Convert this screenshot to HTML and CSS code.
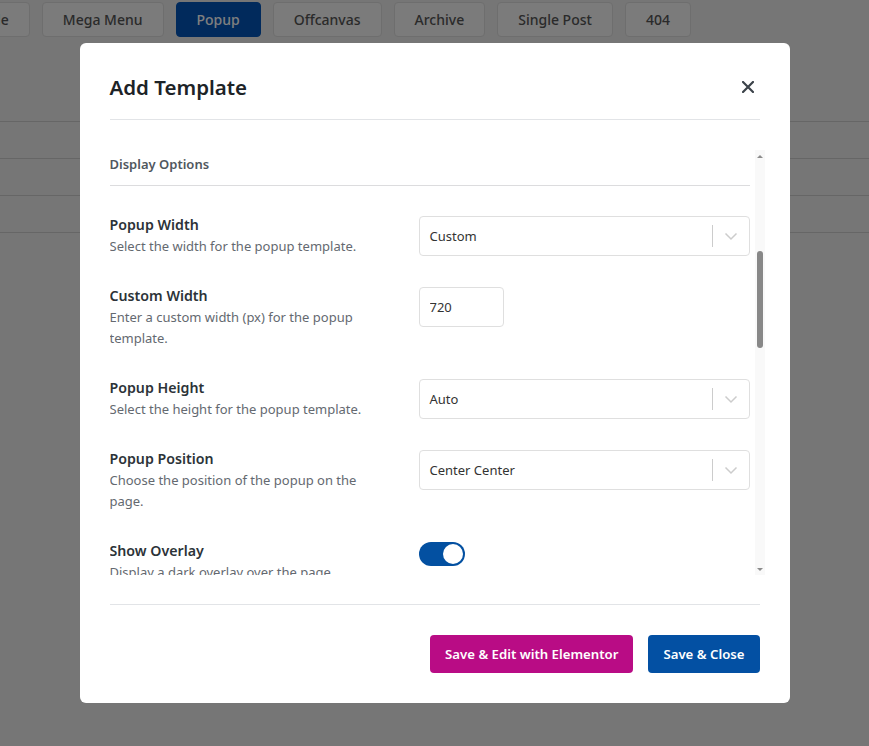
FILE: index.html
```html
<!DOCTYPE html>
<html lang="en">
<head>
    <meta charset="UTF-8">
    <meta name="viewport" content="width=device-width, initial-scale=1.0">
    <title>Templates</title>

    <link rel="stylesheet" href="styles.css">
</head>
<body>
    <div class="page">
        <nav class="tabs">
            <button class="tab">Title</button>
            <button class="tab">Mega Menu</button>
            <button class="tab active">Popup</button>
            <button class="tab">Offcanvas</button>
            <button class="tab">Archive</button>
            <button class="tab">Single Post</button>
            <button class="tab">404</button>
        </nav>

        <div class="list">
            <div class="list-row"></div>
            <div class="list-row"></div>
            <div class="list-row"></div>
        </div>
    </div>

    <div class="overlay">
        <div class="modal">
            <div class="modal-header">
                <h2 class="modal-title">Add Template</h2>
                <button class="modal-close" aria-label="Close">
                    <svg width="12" height="12" viewBox="0 0 12 12"><path d="M1 1L11 11M11 1L1 11" stroke="currentColor" stroke-width="2.2" stroke-linecap="square"/></svg>
                </button>
            </div>

            <div class="modal-body">
                <div class="modal-scroll" id="modal-scroll">

                    <section class="group">
                        <h3 class="group-title">General</h3>

                        <div class="field">
                            <div>
                                <div class="field-label">Template Name</div>
                                <div class="field-desc">Give your template a name to find it later.</div>
                            </div>
                            <input class="input input-wide" type="text" value="Newsletter Signup">
                        </div>

                        <div class="field">
                            <div>
                                <div class="field-label">Template Type</div>
                                <div class="field-desc">Choose the type of template to create.</div>
                            </div>
                            <div class="select">
                                <span class="select-value">Popup</span>
                                <span class="select-sep"></span>
                                <span class="select-arrow"><svg width="20" height="20" viewBox="0 0 20 20"><path d="M4.5 7.5L10 13L15.5 7.5" fill="none" stroke="currentColor" stroke-width="1.5"/></svg></span>
                            </div>
                        </div>

                        <div class="field">
                            <div>
                                <div class="field-label">Display Conditions</div>
                                <div class="field-desc">Choose where this template should appear.</div>
                            </div>
                            <div class="select">
                                <span class="select-value">Entire Site</span>
                                <span class="select-sep"></span>
                                <span class="select-arrow"><svg width="20" height="20" viewBox="0 0 20 20"><path d="M4.5 7.5L10 13L15.5 7.5" fill="none" stroke="currentColor" stroke-width="1.5"/></svg></span>
                            </div>
                        </div>

                        <div class="field">
                            <div>
                                <div class="field-label">Enable Template</div>
                                <div class="field-desc">Turn the template on right after saving.</div>
                            </div>
                            <div class="switch" role="switch" aria-checked="true"><span class="switch-knob"></span></div>
                        </div>
                    </section>

                    <section class="group" id="display-options">
                        <h3 class="group-title">Display Options</h3>

                        <div class="field">
                            <div>
                                <div class="field-label">Popup Width</div>
                                <div class="field-desc">Select the width for the popup template.</div>
                            </div>
                            <div class="select">
                                <span class="select-value">Custom</span>
                                <span class="select-sep"></span>
                                <span class="select-arrow"><svg width="20" height="20" viewBox="0 0 20 20"><path d="M4.5 7.5L10 13L15.5 7.5" fill="none" stroke="currentColor" stroke-width="1.5"/></svg></span>
                            </div>
                        </div>

                        <div class="field">
                            <div>
                                <div class="field-label">Custom Width</div>
                                <div class="field-desc">Enter a custom width (px) for the popup template.</div>
                            </div>
                            <input class="input" type="text" value="720">
                        </div>

                        <div class="field">
                            <div>
                                <div class="field-label">Popup Height</div>
                                <div class="field-desc">Select the height for the popup template.</div>
                            </div>
                            <div class="select">
                                <span class="select-value">Auto</span>
                                <span class="select-sep"></span>
                                <span class="select-arrow"><svg width="20" height="20" viewBox="0 0 20 20"><path d="M4.5 7.5L10 13L15.5 7.5" fill="none" stroke="currentColor" stroke-width="1.5"/></svg></span>
                            </div>
                        </div>

                        <div class="field">
                            <div>
                                <div class="field-label">Popup Position</div>
                                <div class="field-desc">Choose the position of the popup on the page.</div>
                            </div>
                            <div class="select">
                                <span class="select-value">Center Center</span>
                                <span class="select-sep"></span>
                                <span class="select-arrow"><svg width="20" height="20" viewBox="0 0 20 20"><path d="M4.5 7.5L10 13L15.5 7.5" fill="none" stroke="currentColor" stroke-width="1.5"/></svg></span>
                            </div>
                        </div>

                        <div class="field">
                            <div>
                                <div class="field-label">Show Overlay</div>
                                <div class="field-desc">Display a dark overlay over the page.</div>
                            </div>
                            <div class="switch" role="switch" aria-checked="true"><span class="switch-knob"></span></div>
                        </div>

                        <div class="field">
                            <div>
                                <div class="field-label">Overlay Color</div>
                                <div class="field-desc">Pick the color of the overlay background.</div>
                            </div>
                            <input class="input input-wide" type="text" value="rgba(0, 0, 0, 0.5)">
                        </div>

                        <div class="field">
                            <div>
                                <div class="field-label">Close on Overlay Click</div>
                                <div class="field-desc">Close when the overlay is clicked.</div>
                            </div>
                            <div class="switch" role="switch" aria-checked="true"><span class="switch-knob"></span></div>
                        </div>

                        <div class="field">
                            <div>
                                <div class="field-label">Show Close Button</div>
                                <div class="field-desc">Display a close icon in the popup corner.</div>
                            </div>
                            <div class="switch" role="switch" aria-checked="true"><span class="switch-knob"></span></div>
                        </div>

                        <div class="field">
                            <div>
                                <div class="field-label">Prevent Page Scroll</div>
                                <div class="field-desc">Stop the page from scrolling behind it.</div>
                            </div>
                            <div class="switch off" role="switch" aria-checked="false"><span class="switch-knob"></span></div>
                        </div>
                    </section>

                    <section class="group">
                        <h3 class="group-title">Trigger Options</h3>

                        <div class="field">
                            <div>
                                <div class="field-label">Trigger</div>
                                <div class="field-desc">Choose when the popup should open.</div>
                            </div>
                            <div class="select">
                                <span class="select-value">On Page Load</span>
                                <span class="select-sep"></span>
                                <span class="select-arrow"><svg width="20" height="20" viewBox="0 0 20 20"><path d="M4.5 7.5L10 13L15.5 7.5" fill="none" stroke="currentColor" stroke-width="1.5"/></svg></span>
                            </div>
                        </div>

                        <div class="field">
                            <div>
                                <div class="field-label">Delay</div>
                                <div class="field-desc">Seconds to wait before the popup opens.</div>
                            </div>
                            <input class="input" type="text" value="3">
                        </div>

                        <div class="field">
                            <div>
                                <div class="field-label">Show Frequency</div>
                                <div class="field-desc">How often a visitor sees the popup.</div>
                            </div>
                            <div class="select">
                                <span class="select-value">Once per session</span>
                                <span class="select-sep"></span>
                                <span class="select-arrow"><svg width="20" height="20" viewBox="0 0 20 20"><path d="M4.5 7.5L10 13L15.5 7.5" fill="none" stroke="currentColor" stroke-width="1.5"/></svg></span>
                            </div>
                        </div>

                        <div class="field">
                            <div>
                                <div class="field-label">Entrance Animation</div>
                                <div class="field-desc">Animation used when the popup appears.</div>
                            </div>
                            <div class="select">
                                <span class="select-value">Fade In</span>
                                <span class="select-sep"></span>
                                <span class="select-arrow"><svg width="20" height="20" viewBox="0 0 20 20"><path d="M4.5 7.5L10 13L15.5 7.5" fill="none" stroke="currentColor" stroke-width="1.5"/></svg></span>
                            </div>
                        </div>
                    </section>

                    <section class="group">
                        <h3 class="group-title">Advanced</h3>

                        <div class="field">
                            <div>
                                <div class="field-label">CSS Class</div>
                                <div class="field-desc">Extra class names for the popup wrapper.</div>
                            </div>
                            <input class="input input-wide" type="text" value="">
                        </div>

                        <div class="field">
                            <div>
                                <div class="field-label">Custom ID</div>
                                <div class="field-desc">Unique ID for targeting the popup.</div>
                            </div>
                            <input class="input input-wide" type="text" value="">
                        </div>

                        <div class="field">
                            <div>
                                <div class="field-label">Z-Index</div>
                                <div class="field-desc">Stacking order of the popup.</div>
                            </div>
                            <input class="input" type="text" value="9999">
                        </div>
                    </section>

                </div>

                <div class="scrollbar">
                    <span class="scroll-arrow up"></span>
                    <div class="scroll-track" id="scroll-track"><span class="scroll-thumb" id="scroll-thumb"></span></div>
                    <span class="scroll-arrow down"></span>
                </div>
            </div>

            <div class="modal-footer">
                <button class="btn btn-elementor">Save &amp; Edit with Elementor</button>
                <button class="btn btn-primary">Save &amp; Close</button>
            </div>
        </div>
    </div>

    <script>
    const modalScroll = document.getElementById('modal-scroll');
    const scrollTrack = document.getElementById('scroll-track');
    const scrollThumb = document.getElementById('scroll-thumb');

    // keep the slim scrollbar in step with the settings list
    function drawScrollbar() {
        const trackHeight = scrollTrack.clientHeight;
        const thumbHeight = Math.round(trackHeight * modalScroll.clientHeight / modalScroll.scrollHeight);
        const maxScroll = modalScroll.scrollHeight - modalScroll.clientHeight;
        const thumbTop = Math.round((trackHeight - thumbHeight) * modalScroll.scrollTop / maxScroll);
        scrollThumb.style.height = thumbHeight + 'px';
        scrollThumb.style.marginTop = thumbTop + 'px';
    }

    // open the dialog on the display options group
    modalScroll.scrollTop = document.getElementById('display-options').offsetTop;
    modalScroll.addEventListener('scroll', drawScrollbar);
    drawScrollbar();
    </script>
</body>
</html>
```

FILE: styles.css
```css
body {
    margin: 0;
    background-color: #ededed;
    font-family: "Noto Sans", "Open Sans", sans-serif;
}

/* Page behind the dialog */
.tabs {
    display: flex;
    gap: 12px;
    padding-top: 2px;
    margin-left: -41px;
}

.tab {
    flex: none;
    height: 35px;
    padding: 0 20px;
    background-color: #f6f6f6;
    color: #555;
    border: 1px solid #dcdcdc;
    border-radius: 4px;
    font-family: inherit;
    font-size: 14px;
    font-weight: 500;
}

.tab.active {
    background-color: #0254b8;
    border-color: #0254b8;
    color: #ffffff;
}

.list {
    margin-top: 84px;
}

.list-row {
    height: 36px;
    border-top: 1px solid #cccccc;
}

.list-row:last-child {
    border-bottom: 1px solid #cccccc;
}

/* Dialog */
.overlay {
    position: fixed;
    inset: 0;
    background-color: rgba(0, 0, 0, 0.5);
    display: flex;
    align-items: center;
    justify-content: center;
}

.modal {
    width: 710px;
    box-sizing: border-box;
    padding: 30px;
    background-color: #ffffff;
    border-radius: 6px;
    display: flex;
    flex-direction: column;
}

.modal-header {
    display: flex;
    align-items: center;
    justify-content: space-between;
    padding-bottom: 18px;
    border-bottom: 1px solid #e2e4e7;
}

.modal-title {
    margin: 0;
    font-size: 20.5px;
    line-height: 28px;
    font-weight: 600;
    color: #1d2327;
}

.modal-close {
    width: 24px;
    height: 24px;
    padding: 0;
    border: none;
    background: none;
    color: #3c434a;
    display: flex;
    align-items: center;
    justify-content: center;
    cursor: pointer;
}

.modal-body {
    display: flex;
    gap: 5px;
    height: 425px;
    margin: 30px -5px 0 0;
}

.modal-scroll {
    position: relative;
    flex: 1;
    min-width: 0;
    overflow-y: auto;
    scrollbar-width: none;
    padding-bottom: 5px;
}

/* Slim scrollbar drawn beside the list */
.scrollbar {
    flex: none;
    width: 10px;
    background-color: #f9f9f9;
    display: flex;
    flex-direction: column;
}

.scroll-arrow {
    height: 12px;
    display: flex;
    align-items: center;
    justify-content: center;
}

.scroll-arrow::before {
    content: "";
    border-left: 3px solid transparent;
    border-right: 3px solid transparent;
}

.scroll-arrow.up::before {
    border-bottom: 3px solid #8c8c8c;
}

.scroll-arrow.down::before {
    border-top: 3px solid #8c8c8c;
}

.scroll-track {
    flex: 1;
    display: flex;
    flex-direction: column;
}

.scroll-thumb {
    margin: 0 2px;
    border-radius: 3px;
    background-color: #888;
}

.group:first-child {
    padding-top: 31px;
}

.group + .group {
    margin-top: 40px;
}

.group-title {
    margin: 0 0 30px;
    padding: 1px 0 8px;
    border-bottom: 1px solid #dcdcde;
    font-size: 13px;
    line-height: 26px;
    font-weight: 600;
    color: #50575e;
}

.field {
    display: grid;
    grid-template-columns: 279px 1fr;
    column-gap: 30px;
    align-items: start;
}

.field + .field {
    margin-top: 30px;
}

.field-label {
    font-size: 14.2px;
    line-height: 17px;
    font-weight: 600;
    color: #2c3338;
}

.field-desc {
    margin-top: 3px;
    font-size: 13px;
    line-height: 21px;
    color: #646970;
}

.select {
    display: flex;
    align-items: center;
    height: 40px;
    box-sizing: border-box;
    border: 1px solid #dfdfdf;
    border-radius: 4px;
    background-color: #ffffff;
}

.select-value {
    flex: 1;
    padding-left: 10px;
    font-size: 13px;
    color: #333;
}

.select-sep {
    align-self: stretch;
    width: 1px;
    margin: 8px 0;
    background-color: #cccccc;
}

.select-arrow {
    width: 36px;
    display: flex;
    justify-content: center;
    color: #cccccc;
}

.input {
    width: 85px;
    height: 40px;
    box-sizing: border-box;
    padding: 0 10px;
    border: 1px solid #dfdfdf;
    border-radius: 4px;
    font-family: inherit;
    font-size: 13px;
    color: #333;
}

.input-wide {
    width: 100%;
}

.switch {
    width: 46px;
    height: 24px;
    box-sizing: border-box;
    padding: 0 2px;
    border-radius: 12px;
    background-color: #0350a1;
    display: flex;
    align-items: center;
    justify-content: flex-end;
}

.switch.off {
    justify-content: flex-start;
    background-color: #c3c4c7;
}

.switch-knob {
    width: 20px;
    height: 20px;
    border-radius: 50%;
    background-color: #ffffff;
}

.modal-footer {
    margin-top: 29px;
    padding-top: 30px;
    border-top: 1px solid #e2e4e7;
    display: flex;
    justify-content: flex-end;
    gap: 15px;
}

.btn {
    height: 38px;
    padding: 0 15px;
    border: none;
    border-radius: 4px;
    color: #ffffff;
    font-family: inherit;
    font-size: 13.2px;
    font-weight: 600;
    cursor: pointer;
}

.btn-elementor {
    background-color: #b90c85;
}

.btn-primary {
    background-color: #0350a3;
}
```
